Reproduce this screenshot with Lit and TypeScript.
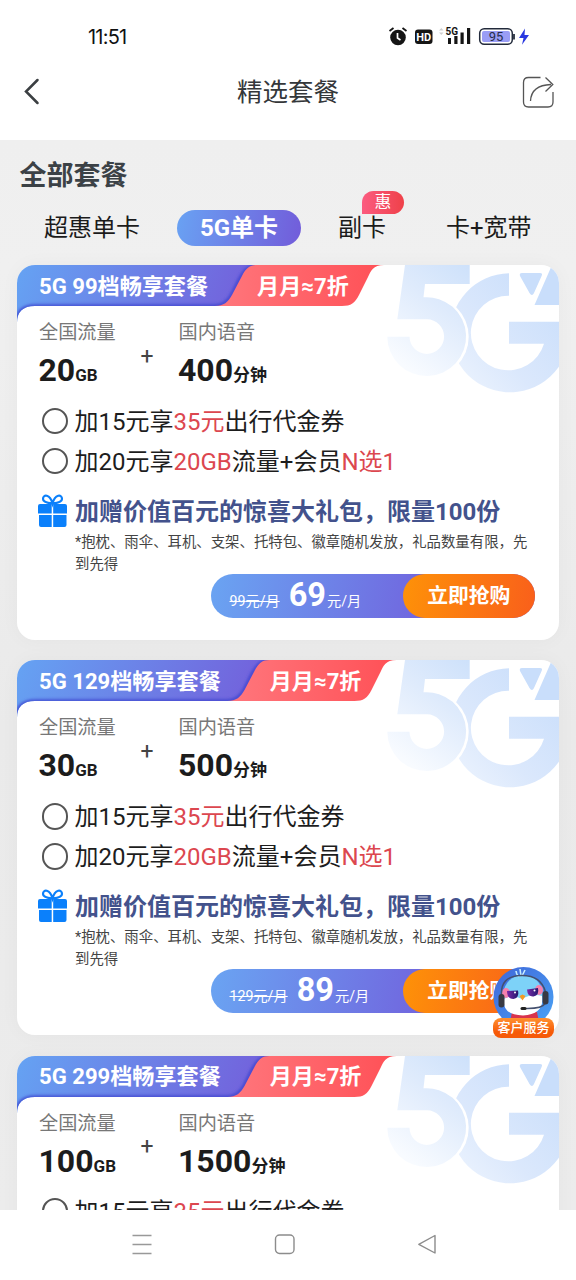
import { LitElement, html, svg, css } from "lit";
import { customElement, property } from "lit/decorators.js";

interface Plan {
  id: string;
  title: string;
  data: string;
  voice: string;
  oldPrice: string;
  price: string;
  shift: number;
}

const PLANS: Plan[] = [
  { id: "a", title: "5G 99档畅享套餐", data: "20", voice: "400", oldPrice: "99", price: "69", shift: 0 },
  { id: "b", title: "5G 129档畅享套餐", data: "30", voice: "500", oldPrice: "129", price: "89", shift: 12.5 },
  { id: "c", title: "5G 299档畅享套餐", data: "100", voice: "1500", oldPrice: "299", price: "199", shift: 12.5 },
];

@customElement("plan-card")
export class PlanCard extends LitElement {
  @property({ attribute: false }) plan!: Plan;

  static styles = css`
    :host { display: block; height: 374.5px; }
    .card {
      display: grid; height: 100%; border-radius: 18px; overflow: hidden; background: #fff;
    }
    .art, .content { grid-area: 1 / 1; min-width: 0; }
    .art { display: block; }
    .content { display: flex; flex-direction: column; }
    .head {
      display: flex; height: 41px; padding-left: 22px; gap: 49px; align-items: center;
      color: #fff; font-size: 22.1px; font-weight: 700; line-height: 40px; white-space: nowrap;
    }
    .facts { display: grid; grid-template-columns: 101.5px 38px 1fr; padding: 13px 22px 0; height: 71px; }
    .label { font-size: 19.2px; line-height: 28px; color: #777; }
    .value { display: flex; align-items: baseline; font-size: 32px; line-height: 44px; font-weight: 700; color: #1c1c1c; margin: 1px 0 0 -0.5px; }
    .unit { font-size: 17px; font-weight: 700; }
    .plus { font-size: 23px; line-height: 28px; margin-top: 23.500px; color: #444; }
    .options { display: flex; flex-direction: column; padding: 11px 0 0 24.5px; }
    .option { display: flex; align-items: center; height: 40px; gap: 6.500px; font-size: 24px; color: #1d1d1d; white-space: nowrap; }
    .option-text { line-height: 36px; margin-top: 1px; }
    .radio { box-sizing: border-box; width: 26.5px; height: 26.5px; border: 2px solid #555; border-radius: 50%; }
    .hot { color: #dc474f; }
    .gift { display: flex; padding: 13px 22px 0 21px; gap: 6px; }
    .gift svg { flex: none; margin-top: -1px; }
    .gift-title { font-size: 24px; line-height: 36px; font-weight: 700; color: #43528c; white-space: nowrap; }
    .note { font-size: 14.4px; line-height: 22px; color: #444; width: 458px; margin: 1.500px 0 0; }
    .buy {
      display: flex; align-self: flex-end; width: 324.5px; height: 43.5px; margin: -1.500px 24px 0 0;
      border-radius: 22px; background: linear-gradient(100deg, #6aa4f2, #7164de 68%); color: #fff;
    }
    .price { display: flex; flex: 1; align-items: baseline; padding-left: 19px; line-height: 43px; white-space: nowrap; font-size: 14.2px; }
    .old { text-decoration: line-through; }
    .now { font-size: 32.5px; font-weight: 700; margin: 0 1px 0 9px; }
    .go {
      width: 132.5px; border-radius: 22px; text-align: center; font-size: 20.8px; line-height: 45px; font-weight: 700;
      background: linear-gradient(100deg, #fe9208, #f95f1b);
    }
  `;

  private art(shift: number, id: string) {
    return svg`
      <defs>
        <linearGradient id=${"b" + id} x1="0" x2="1" y1="0" y2="0.1"><stop offset="0" stop-color="#65a3f3"/><stop offset="1" stop-color="#7360db"/></linearGradient>
        <linearGradient id=${"r" + id}><stop offset="0" stop-color="#ff777d"/><stop offset="1" stop-color="#ff5056"/></linearGradient>
        <linearGradient id=${"w" + id} gradientUnits="userSpaceOnUse" x1="490" y1="-10" x2="400" y2="110"><stop offset="0" stop-color="#c3dbfa"/><stop offset="0.55" stop-color="#dfebfc"/><stop offset="1" stop-color="#f8fbff"/></linearGradient>
        <linearGradient id=${"g" + id} gradientUnits="userSpaceOnUse" x1="620" y1="130" x2="300" y2="420"><stop offset="0" stop-color="#c9defb"/><stop offset="0.6" stop-color="#dbe8fc"/><stop offset="1" stop-color="#edf4fe"/></linearGradient>
        <filter id=${"s" + id} x="-10%" y="-30%" width="120%" height="160%"><feGaussianBlur stdDeviation="1.8"/></filter>
        <clipPath id=${"c" + id}><path d="M0 0H${245 + shift}V41H18Q0 41 0 58Z"/></clipPath>
      </defs>
      <g transform="translate(343 -10) scale(.33333)">
        <path d="M447 55A178.5 178.5 0 1 0 625 200H447V266H552A112 112 0 1 1 447 122Z" fill="url(#${"g" + id})"/>
      </g>
      <circle cx="410.7" cy="71.7" r="41" fill="#fff"/>
      <path fill="url(#${"w" + id})" d="M388 0H452.7V19H408L406.5 32.3A39.4 39.4 0 1 1 370.3 71.7H392.5A17.3 17.3 0 1 0 410 54.3H380.3Z"/>
      <path fill="#c9defb" d="M505 8H523Q526 8 524.6 11L517 28Q515 32 512.5 28L503 11Q502 8 505 8ZM535 0H542V40H517.5Z"/>
      <path d="M0 0H${242 + shift}V41H18Q0 41 0 58Z" fill="url(#${"b" + id})"/>
      <g clip-path="url(#${"c" + id})">
        <path d="M-2 60Q0 41 18 41H${198 + shift}C${222 + shift} 41 ${216 + shift} 0 ${242 + shift} 0" fill="none" stroke="#3d45cf" stroke-width="3" filter="url(#${"s" + id})"/>
      </g>
      <path d="M${240 + shift} 0H${367 + shift}C${356 + shift} 0 ${354 + shift} 6 ${351 + shift} 12L${342 + shift} 30C${338 + shift} 38 ${334 + shift} 41 ${325 + shift} 41H${198 + shift}C${207 + shift} 41 ${211 + shift} 37 ${215 + shift} 30L${225 + shift} 11C${229 + shift} 3 ${233 + shift} 0 ${240 + shift} 0Z" fill="url(#${"r" + id})"/>
    `;
  }

  render() {
    const p = this.plan;
    return html`<div class="card">
      <svg class="art" width="542" height="140" viewBox="0 0 542 140">${this.art(p.shift, p.id)}</svg>
      <div class="content">
        <div class="head"><span>${p.title}</span><span>月月≈7折</span></div>
        <div class="facts">
          <div><div class="label">全国流量</div><div class="value">${p.data}<span class="unit">GB</span></div></div>
          <div class="plus">+</div>
          <div><div class="label">国内语音</div><div class="value">${p.voice}<span class="unit">分钟</span></div></div>
        </div>
        <div class="options">
          <div class="option"><span class="radio"></span><span class="option-text">加15元享<span class="hot">35元</span>出行代金券</span></div>
          <div class="option"><span class="radio"></span><span class="option-text">加20元享<span class="hot">20GB</span>流量+会员<span class="hot">N选1</span></span></div>
        </div>
        <div class="gift">
          <svg width="31" height="36" viewBox="1 0 31 36">
            <path d="M3 11H14.7V20.5H1V13Q1 11 3 11ZM16.2 11H28Q30 11 30 13V20.5H16.2ZM2 22H14.7V34H4Q2 34 2 32ZM16.2 22H29.5V32Q29.5 34 27.5 34H16.2Z" fill="#0b80fb"/>
            <path d="M15.5 10.500C12 10 6 9.500 6 6C6 1 13 1 15.500 10.500C18 1 25 1 25 6C25 9.500 19 10 15.500 10.500Z" fill="none" stroke="#0b80fb" stroke-width="2.200"/>
          </svg>
          <div><div class="gift-title">加赠价值百元的惊喜大礼包，限量100份</div>
          <div class="note">*抱枕、雨伞、耳机、支架、托特包、徽章随机发放，礼品数量有限，先到先得</div></div>
        </div>
        <div class="buy">
          <div class="price"><span class="old">${p.oldPrice}元/月</span><span class="now">${p.price}</span><span>元/月</span></div>
          <div class="go">立即抢购</div>
        </div>
      </div>
    </div>`;
  }
}

@customElement("app-root")
export class AppRoot extends LitElement {
  static styles = css`
    :host {
      display: flex; flex-direction: column; position: relative; height: 1280px; overflow: hidden; background: #fff;
      font-family: Roboto, "Noto Sans CJK SC", sans-serif;
    }
    .status { display: flex; flex: none; height: 64px; padding: 10px 44px 0 88px; box-sizing: border-box; justify-content: space-between; align-items: center; }
    .time { font: 400 20px/24px Inter, sans-serif; letter-spacing: -0.8px; color: #111; }
    .bar { display: flex; flex: none; height: 76px; box-sizing: border-box; padding: 0 20px 20px 22px; align-items: center; justify-content: space-between; }
    .bar-title { font-size: 25.5px; line-height: 36px; margin: 0 0 0 2px; color: #34373a; }
    .main { flex: none; height: 1070px; overflow: hidden; box-sizing: border-box; background: linear-gradient(#efefef, #f0f0f0 12%, #eaeaea 55%, #ececec); }
    .heading { font-size: 27px; line-height: 36px; font-weight: 700; color: #3b4146; padding: 17.500px 19.500px 0; }
    .tabs { display: flex; height: 37px; margin: 15.500px 0 19px; padding-left: 44px; align-items: center; font-size: 24px; line-height: 36px; color: #1b1b1b; white-space: nowrap; }
    .tab { position: relative; }
    .active { margin: 0 37px; width: 124px; text-align: center; border-radius: 19px; line-height: 36px; font-weight: 700; color: #fff; background: linear-gradient(100deg, #69a2f3, #725cda); }
    .last { margin-left: 60px; }
    .badge {
      position: absolute; left: 24px; top: -19px; width: 42px; height: 23px; line-height: 22px; text-align: center;
      font-size: 16.8px; color: #fff; border-radius: 12px 12px 12px 0; background: linear-gradient(90deg, #fb5b80, #ef4149);
    }
    .cards { display: flex; flex-direction: column; gap: 20.8px; padding: 0 17px; }
    plan-card { flex: none; border-radius: 18px; box-shadow: 0 0 20px rgba(0,0,0,.035); }
    .nav { display: flex; flex: none; height: 70px; align-items: center; justify-content: center; gap: 122px; padding-right: 6px; }
    .help { position: absolute; left: 491px; top: 966px; width: 65px; height: 74px; }
    .bird { display: block; }
    .help-label {
      position: absolute; left: 2px; bottom: 2px; width: 61px; height: 20px; border-radius: 8px; line-height: 20px;
      text-align: center; color: #fff; font-size: 13px; font-weight: 500; background: linear-gradient(#ff9130, #f65a08 70%);
    }
  `;

  render() {
    return html`
      <div class="status">
        <span class="time">11:51</span>
        <svg width="144" height="24" viewBox="388 25 144 24">
          <circle cx="398" cy="37.500" r="7.800" fill="#151515"/>
          <path d="M389.500 31L393.500 28M402.500 28L406.500 31" stroke="#151515" stroke-width="1.800"/>
          <path d="M397.500 33V38L400.500 40" fill="none" stroke="#fff" stroke-width="1.700"/>
          <rect x="415" y="29.500" width="17.500" height="14.500" rx="3" fill="#151515"/>
          <text x="423.700" y="41" text-anchor="middle" font-size="11" font-weight="700" fill="#fff">HD</text>
          <path d="M439 30.500L441.300 28L443.600 30.500ZM439 32.500L441.300 35L443.600 32.500Z" fill="#d0d0d0"/>
          <text x="445.500" y="35" font-size="10" font-weight="700" fill="#151515">5G</text>
          <path d="M448 38H451V44H448ZM454.300 36H457.500V44H454.300ZM460.500 32.500H463.700V44H460.500ZM467 28H470.200V44H467Z" fill="#151515"/>
          <rect x="479.700" y="28.700" width="32.600" height="15.600" rx="4.500" fill="#fff" stroke="#222a3b" stroke-width="1.500"/>
          <rect x="482" y="31" width="28" height="11" rx="2" fill="#9a9df5"/>
          <path d="M514 34V39.500" stroke="#3a4250" stroke-width="2"/>
          <text x="496" y="41.300" text-anchor="middle" font-size="13" fill="#262d4a">95</text>
          <path d="M525 28.500L519 38H523.500L522 44.800L529 35H524.500Z" fill="#2938e0"/>
        </svg>
      </div>
      <div class="bar">
        <svg width="30" height="34" viewBox="22 75 30 34"><path d="M37.500 80L26 91.500L37.500 103" fill="none" stroke="#3b3f42" stroke-width="2.500" stroke-linecap="round"/></svg>
        <span class="bar-title">精选套餐</span>
        <svg width="34" height="34" viewBox="522 75 34 34" fill="none" stroke="#555" stroke-width="1.300"><path d="M540.500 77.500H528.500Q523.500 77.500 523.500 82.500V102Q523.500 107 528.500 107H548Q553 107 553 102V92"/><path d="M530.500 101C531 91 537 85 551 84.500M545.500 77.500L552.800 84.500L545.500 91.500"/></svg>
      </div>
      <div class="main">
        <div class="heading">全部套餐</div>
        <div class="tabs">
          <span class="tab">超惠单卡</span>
          <span class="tab active">5G单卡</span>
          <span class="tab">副卡<span class="badge">惠</span></span>
          <span class="tab last">卡+宽带</span>
        </div>
        <div class="cards">${PLANS.map((p) => html`<plan-card .plan=${p}></plan-card>`)}</div>
      </div>
      <div class="nav">
        <svg width="20" height="22" viewBox="0 0 20 22"><path d="M.5 1.500H19.500M.5 10.500H19.500M.5 19.500H19.500" stroke="#999" stroke-width="1.500"/></svg>
        <svg width="22" height="22" viewBox="0 0 22 22"><rect x="1.500" y="1" width="18.500" height="18.500" rx="4" fill="none" stroke="#8c8c8c" stroke-width="1.400"/></svg>
        <svg width="20" height="22" viewBox="0 0 20 22"><path d="M17 1.500V19L.8 10.300Z" fill="none" stroke="#8c8c8c" stroke-width="1.400" stroke-linejoin="round"/></svg>
      </div>
      <div class="help">
        <svg class="bird" width="65" height="74" viewBox="491 966 65 74">
          <defs>
            <linearGradient id="sky" x1="0" y1="0" x2="1" y2="1"><stop offset="0" stop-color="#3f65d9"/><stop offset="1" stop-color="#4aa4f5"/></linearGradient>
            <linearGradient id="eye" x1="0" y1="0" x2="1" y2="0"><stop offset="0" stop-color="#7a2aa8"/><stop offset="1" stop-color="#23186e"/></linearGradient>
            <clipPath id="disc"><circle cx="523.500" cy="997" r="30"/></clipPath>
          </defs>
          <circle cx="523.500" cy="997" r="30" fill="url(#sky)"/>
          <g clip-path="url(#disc)">
            <path d="M512 1012H537L539 1022H510Z" fill="#d8334d"/>
            <ellipse cx="523" cy="994" rx="19.500" ry="19" fill="#7dd2f8"/>
            <path d="M504 999Q513 994 522 999Q532 993 542 996Q545 1014 523 1015.500Q502 1015 504 999Z" fill="#fff"/>
            <ellipse cx="506" cy="993" rx="4" ry="5" fill="#f681ae"/><ellipse cx="539" cy="990" rx="4" ry="5" fill="#f681ae"/>
            <path d="M507 991L518 990.500Q519.500 998 513.500 999Q507 999 507 991Z" fill="url(#eye)"/>
            <path d="M527 989.500L538 988Q539.500 995.500 533.500 996.500Q527.500 997 527 989.500Z" fill="url(#eye)"/>
            <circle cx="515" cy="992.500" r="1" fill="#fff"/><circle cx="534.500" cy="990.500" r="1" fill="#fff"/>
            <path d="M519.500 996L522.500 994.500L525.500 996L522.500 1000.500Z" fill="#f59a20"/>
            <path d="M519 977Q516 974 516 971M521 976L520 969M522 976Q524 972 525 970" stroke="#c6edff" stroke-width="1.600" fill="none"/>
          </g>
          <path d="M501.500 996Q500 976 521 975.500Q541 975 545.500 992M545.500 1003Q542 1009 525 1008.500" fill="none" stroke="#44506e" stroke-width="1.500"/>
          <rect x="498.500" y="994" width="6" height="13.500" rx="3" fill="#393a43"/><rect x="542.500" y="991" width="6" height="13.500" rx="3" fill="#393a43"/>
          <rect x="520.500" y="1007" width="6" height="3" rx="1.500" fill="#222"/>
        </svg>
        <span class="help-label">客户服务</span>
      </div>
    `;
  }
}
